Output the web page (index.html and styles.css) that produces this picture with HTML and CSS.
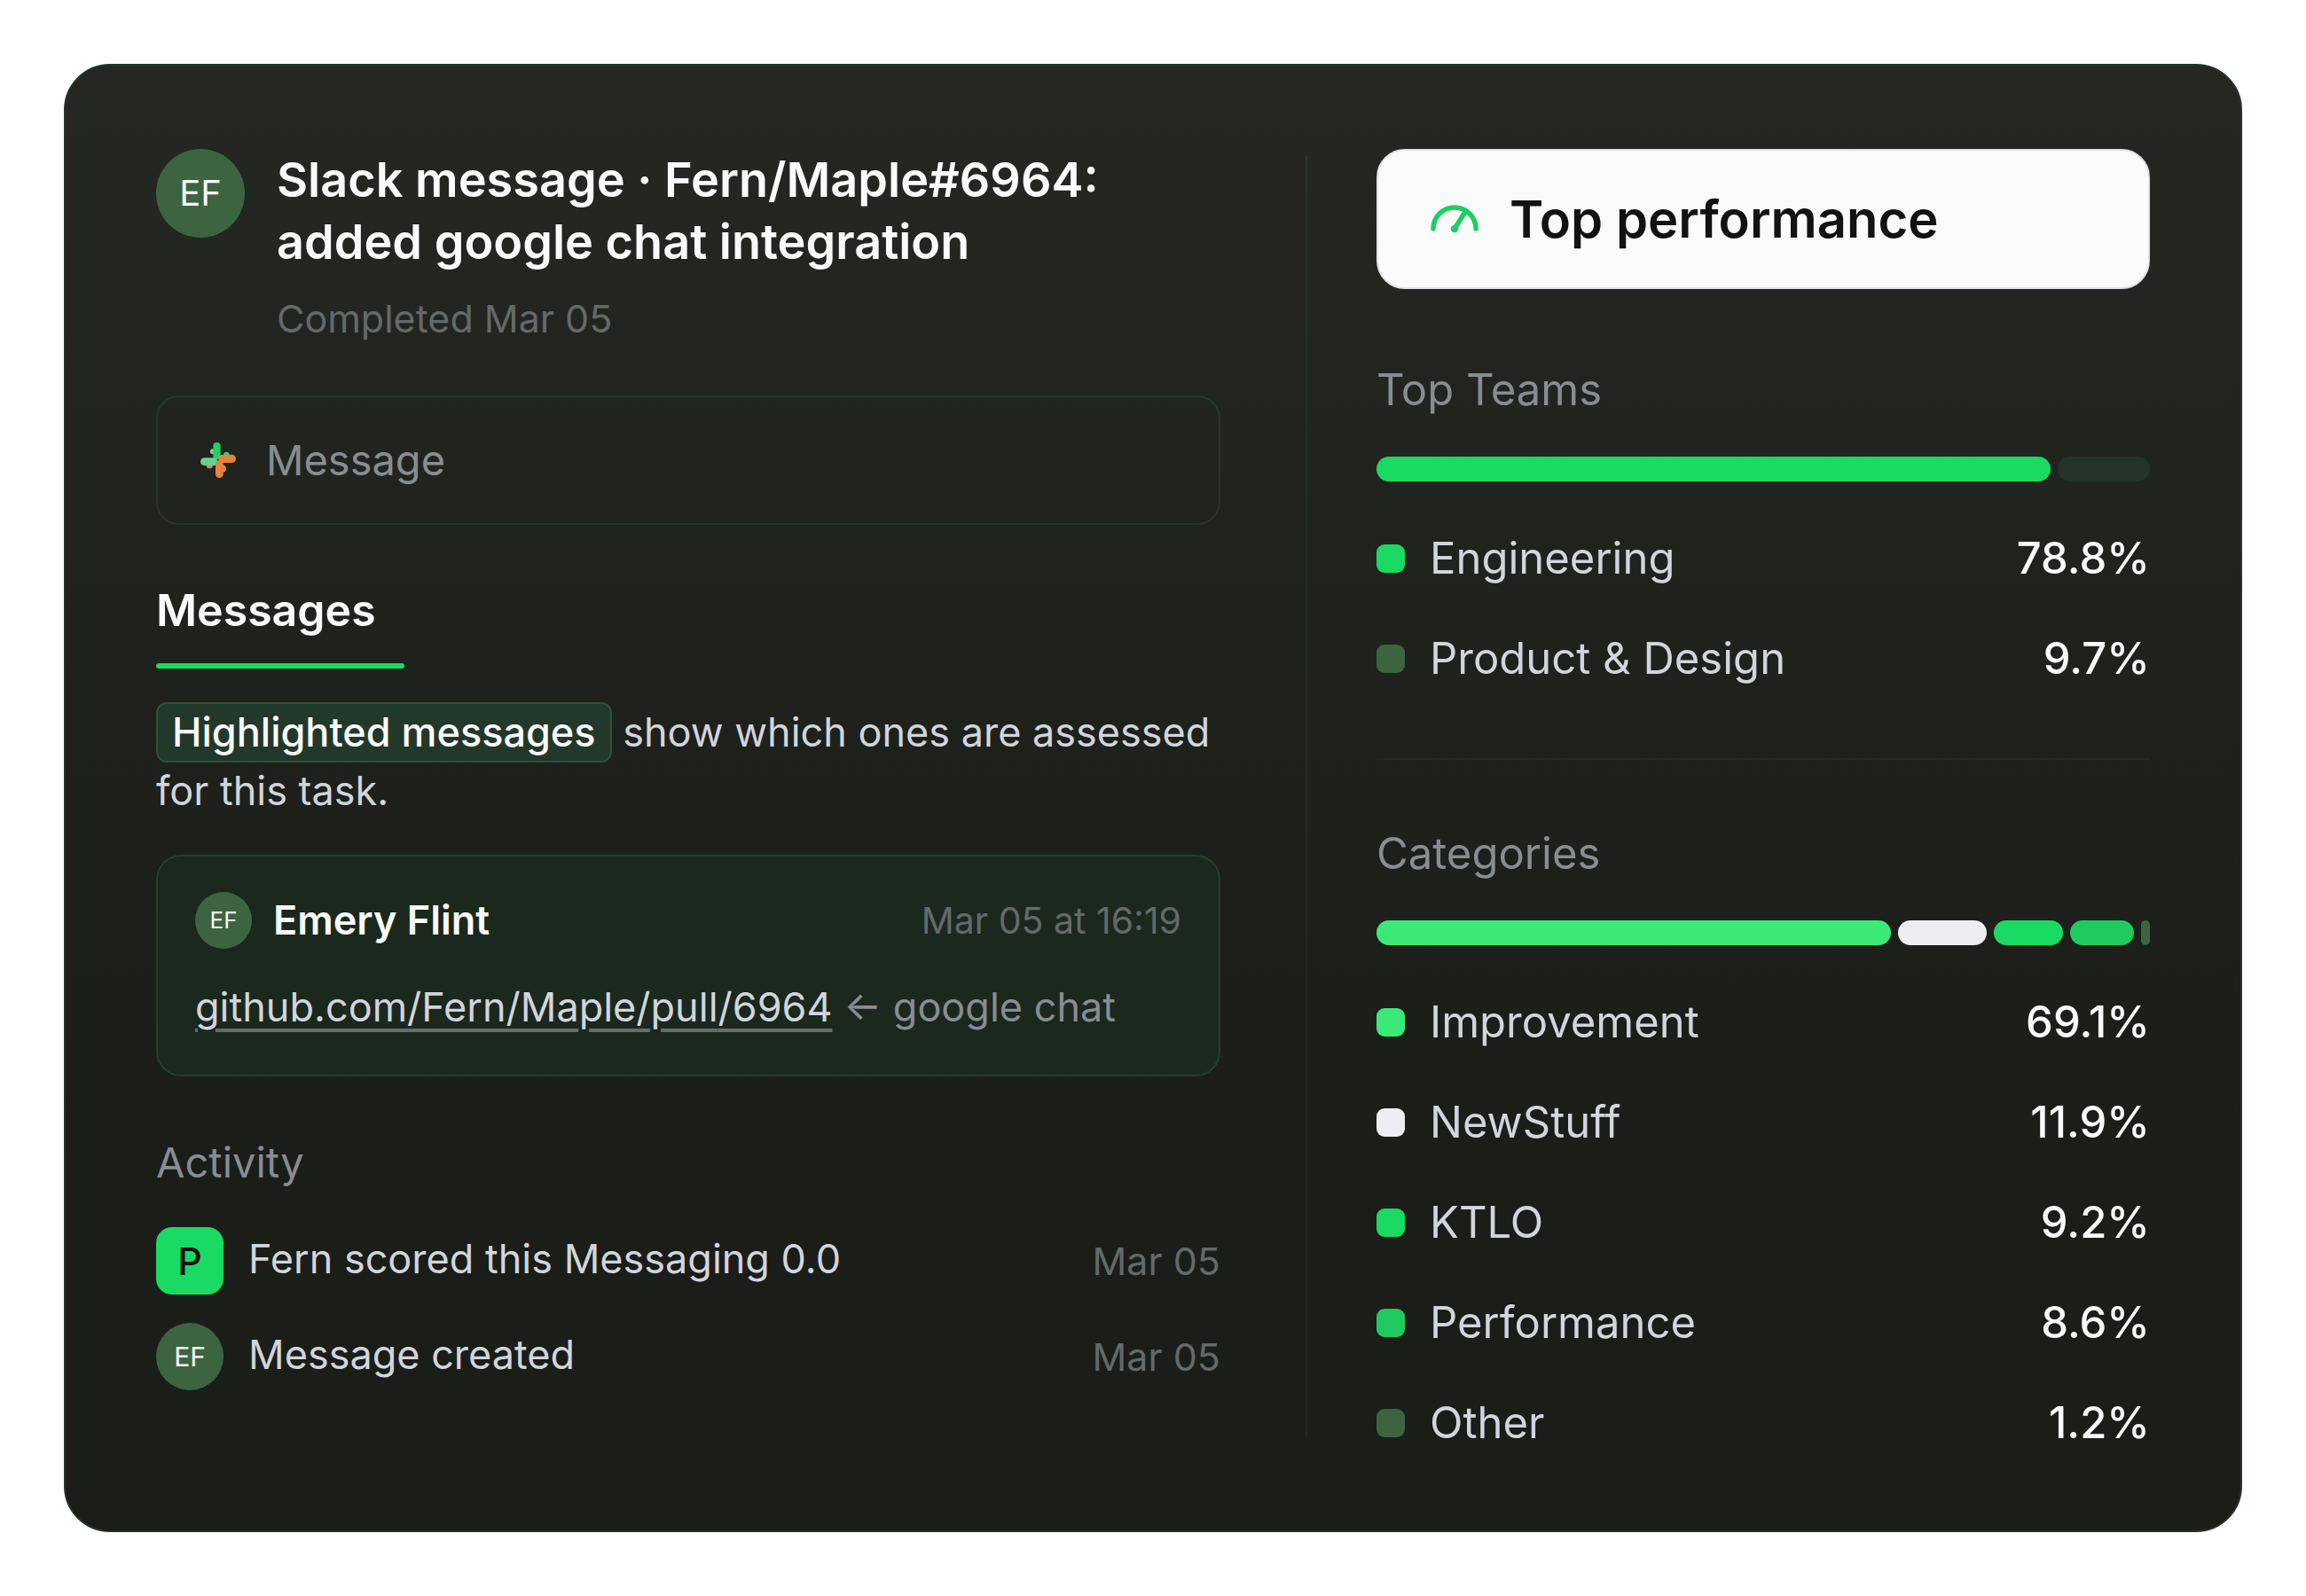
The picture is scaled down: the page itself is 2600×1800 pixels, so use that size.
FILE: index.html
```html
<!DOCTYPE html>
<html lang="en">
<head>
    <meta charset="UTF-8">
    <meta name="viewport" content="width=device-width, initial-scale=1.0">
    <title>Top performance</title>
    <link rel="stylesheet" href="styles.css">
</head>
<body>
    <main class="panel">
        <section class="task">
            <header class="task-header">
                <span class="avatar avatar-lg">EF</span>
                <div>
                    <h1>Slack message · Fern/Maple#6964: added google chat integration</h1>
                    <p class="completed">Completed Mar 05</p>
                </div>
            </header>

            <label class="message-box">
                <svg class="slack-icon" viewBox="0 0 120 120" aria-hidden="true">
                    <circle cx="42" cy="31" r="9" fill="#8fc9a4"/>
                    <circle cx="88" cy="42" r="10" fill="#19db63"/>
                    <circle cx="31" cy="77" r="11" fill="#e5823e"/>
                    <circle cx="74" cy="89" r="13" fill="#e5823e"/>
                    <rect x="43" y="0" width="25" height="58" rx="12" fill="#22cf64"/>
                    <rect x="0" y="52" width="58" height="26" rx="13" fill="#66d290"/>
                    <rect x="51" y="60" width="26" height="60" rx="13" fill="#e5823e"/>
                    <path d="M62 69V56Q62 41 77 41H106A14 14 0 0 1 106 69Z" fill="#e5823e"/>
                </svg>
                <input type="text" name="message" placeholder="Message" aria-label="Message">
            </label>

            <button type="button" class="tab">Messages</button>

            <p class="hint"><mark>Highlighted messages</mark> show which ones are assessed for this task.</p>

            <article class="message-card">
                <div class="message-head">
                    <span class="avatar avatar-sm">EF</span>
                    <strong>Emery Flint</strong>
                    <time>Mar 05 at 16:19</time>
                </div>
                <p class="message-text"><a href="#">github.com/Fern/Maple/pull/6964</a> ← google chat</p>
            </article>

            <h2 class="activity-title">Activity</h2>
            <ul class="activity">
                <li>
                    <span class="badge">P</span>
                    <span class="activity-text">Fern scored this Messaging 0.0</span>
                    <time>Mar 05</time>
                </li>
                <li>
                    <span class="avatar avatar-md">EF</span>
                    <span class="activity-text">Message created</span>
                    <time>Mar 05</time>
                </li>
            </ul>
        </section>

        <div class="divider"></div>

        <aside class="stats">
            <div class="top-card">
                <svg class="gauge-icon" viewBox="0 0 64 64" aria-hidden="true">
                    <path d="M8 43a24 24 0 0 1 48 0M32 43L44 24" fill="none" stroke="#19d160" stroke-width="5.5" stroke-linecap="round"/>
                    <circle cx="32" cy="43" r="4.3" fill="#19d160"/>
                </svg>
                <h2>Top performance</h2>
            </div>

            <section class="group">
                <h3>Top Teams</h3>
                <div class="bar">
                    <span class="green" style="flex-grow: 88"></span>
                    <span class="muted" style="flex-grow: 12"></span>
                </div>
                <ul class="legend">
                    <li><i class="green"></i>Engineering<b>78.8%</b></li>
                    <li><i class="moss"></i>Product &amp; Design<b>9.7%</b></li>
                </ul>
            </section>

            <section class="group">
                <h3>Categories</h3>
                <div class="bar">
                    <span class="mint" style="flex-grow: 69.1"></span>
                    <span class="light" style="flex-grow: 11.9"></span>
                    <span class="green" style="flex-grow: 9.2"></span>
                    <span class="emerald" style="flex-grow: 8.6"></span>
                    <span class="moss" style="flex-grow: 1.2"></span>
                </div>
                <ul class="legend">
                    <li><i class="mint"></i>Improvement<b>69.1%</b></li>
                    <li><i class="light"></i>NewStuff<b>11.9%</b></li>
                    <li><i class="green"></i>KTLO<b>9.2%</b></li>
                    <li><i class="emerald"></i>Performance<b>8.6%</b></li>
                    <li><i class="moss"></i>Other<b>1.2%</b></li>
                </ul>
            </section>
        </aside>
    </main>
</body>
</html>
```

FILE: styles.css
```css
* {
    box-sizing: border-box;
}
body {
    margin: 0;
    padding: 72px;
    background-color: #fff;
    color: #d1d5dc;
    font-family: Inter, "Liberation Sans", sans-serif;
    font-size: 45px;
    line-height: 64px;
}
h1, h2, h3, p, ul {
    margin: 0;
    padding: 0;
}
ul {
    list-style: none;
}
.panel {
    display: grid;
    grid-template-columns: minmax(0, 1200fr) auto minmax(0, 872fr);
    padding: 94px 102px 91px;
    border: 2px solid #22342a;
    border-radius: 52px;
    background: linear-gradient(#252822, #1e201b 50%, #1b1d19 75%);
}
.divider {
    width: 2px;
    margin: 8px 78px 13px 96px;
    background: linear-gradient(#22372a, #22241f 65%);
}

/* avatars */
.avatar, .badge {
    display: flex;
    flex: none;
    align-items: center;
    justify-content: center;
    border-radius: 50%;
    background-color: #3c6441;
    color: #f9fafa;
}
.avatar-lg {
    width: 100px;
    height: 100px;
    font-size: 40px;
}
.avatar-md {
    width: 76px;
    height: 76px;
    font-size: 30px;
}
.avatar-sm {
    width: 64px;
    height: 64px;
    font-size: 26px;
}
.badge {
    width: 76px;
    height: 76px;
    border-radius: 18px;
    background-color: #19db63;
    color: #10130f;
    font-size: 43px;
    font-weight: 500;
}

/* task */
.task-header {
    display: flex;
    gap: 36px;
}
h1 {
    max-width: 960px;
    color: #f9fafa;
    font-size: 54px;
    font-weight: 600;
    line-height: 70px;
}
time, .completed {
    color: #626a6a;
    font-size: 43px;
    line-height: 54px;
}
.completed {
    margin-top: 24px;
}
.message-box {
    display: flex;
    align-items: center;
    gap: 34px;
    height: 146px;
    margin-top: 60px;
    padding: 0 48px;
    border: 2px solid #24382b;
    border-radius: 26px;
}
.slack-icon {
    flex: none;
    width: 40px;
    height: 40px;
}
.message-box input {
    flex: 1;
    min-width: 0;
    padding: 0;
    border: none;
    outline: none;
    background: none;
    color: #d1d5dc;
    font: inherit;
    font-size: 47px;
}
.message-box input::placeholder {
    color: #878d92;
    opacity: 1;
}
.tab {
    display: block;
    margin-top: 64px;
    padding: 0 32px 0 0;
    border: none;
    background: none;
    color: #f9fafa;
    font: inherit;
    font-size: 50px;
    font-weight: 600;
    text-align: left;
    cursor: pointer;
}
.tab::after {
    content: "";
    display: block;
    height: 6px;
    margin: 28px -32px 0 0;
    border-radius: 3px;
    background-color: #19db63;
}
.hint {
    margin-top: 38px;
}
mark {
    display: inline-block;
    padding: 0 16px;
    border: 2px solid #315239;
    border-radius: 12px;
    background-color: #22382a;
    color: #f9fafa;
    font-weight: 500;
}
.message-card {
    margin-top: 40px;
    padding: 40px 42px 44px;
    border: 2px solid #24402d;
    border-radius: 28px;
    background-color: #1b281d;
}
.message-head {
    display: flex;
    align-items: center;
    gap: 24px;
}
.message-head strong {
    color: #f9fafa;
    font-weight: 600;
}
.message-head time, .activity time {
    margin-left: auto;
}
.message-head time {
    font-size: 41px;
}
.message-text {
    margin-top: 34px;
    color: #878d92;
}
.message-text a {
    color: #d1d5dc;
    text-decoration: underline;
    text-decoration-color: #666e6e;
    text-decoration-thickness: 4px;
    text-underline-offset: 8px;
}
.activity-title {
    margin-top: 68px;
    color: #878d92;
    font-size: 47px;
    font-weight: 400;
    line-height: 58px;
}
.activity {
    display: grid;
    gap: 32px;
    margin-top: 44px;
}
.activity li {
    display: flex;
    align-items: center;
    gap: 28px;
}
.activity-text {
    padding-bottom: 4px;
}

/* stats */
.top-card {
    display: flex;
    align-items: center;
    gap: 30px;
    padding: 42px 54px;
    border: 2px solid #dfe2e6;
    border-radius: 32px;
    background-color: #f9fbfa;
}
.top-card h2 {
    color: #10130f;
    font-size: 58px;
    font-weight: 600;
    line-height: 70px;
}
.gauge-icon {
    flex: none;
    width: 64px;
    height: 64px;
}
.group {
    margin-top: 84px;
}
.group + .group {
    margin-top: 82px;
    padding-top: 76px;
    border-top: 2px solid #232a24;
}
.group h3 {
    color: #878d92;
    font-size: 49px;
    font-weight: 400;
    line-height: 60px;
}
.bar {
    display: flex;
    gap: 8px;
    height: 28px;
    margin-top: 45px;
}
.bar span {
    flex-basis: 0;
    border-radius: 14px;
}
.legend {
    display: grid;
    gap: 53px;
    margin-top: 57px;
}
.legend li {
    display: flex;
    align-items: center;
    font-size: 49px;
    line-height: 60px;
}
.legend i {
    width: 32px;
    height: 32px;
    margin-right: 28px;
    border-radius: 9px;
}
.legend b {
    margin-left: auto;
    color: #f9fafa;
    font-weight: 500;
}
.green {
    background-color: #19db63;
}
.mint {
    background-color: #3be979;
}
.emerald {
    background-color: #1fcb5f;
}
.light {
    background-color: #eceef1;
}
.moss {
    background-color: #3c6441;
}
.muted {
    background-color: #223528;
}
```
